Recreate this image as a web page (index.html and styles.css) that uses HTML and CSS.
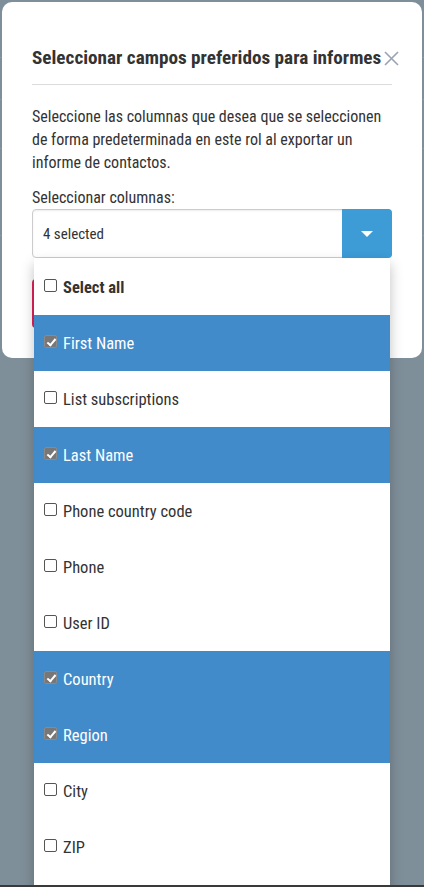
FILE: index.html
```html
<!DOCTYPE html>
<html lang="es">
<head>
<meta charset="utf-8">
<title>Seleccionar campos preferidos</title>
<link rel="stylesheet" href="styles.css">
</head>
<body>
<div class="modal">
  <div class="modal-header">
    <h2 class="modal-title">Seleccionar campos preferidos para informes</h2>
    <button class="close" aria-label="Cerrar">
      <svg width="15" height="15" viewBox="0 0 15 15"><path d="M1 1 L14 14 M14 1 L1 14" stroke="#98a3b3" stroke-width="1.6" fill="none"/></svg>
    </button>
  </div>
  <p class="desc">Seleccione las columnas que desea que se seleccionen de forma predeterminada en este rol al exportar un informe de contactos.</p>
  <div class="label">Seleccionar columnas:</div>
  <div class="select">
    <div class="select-box">
      <div class="select-text">4 selected</div>
      <div class="select-btn"><span class="caret"></span></div>
    </div>
    <ul class="dropdown">
      <li class="option all"><span class="cb"></span>Select all</li>
      <li class="option selected"><span class="cb checked"></span>First Name</li>
      <li class="option"><span class="cb"></span>List subscriptions</li>
      <li class="option selected"><span class="cb checked"></span>Last Name</li>
      <li class="option"><span class="cb"></span>Phone country code</li>
      <li class="option"><span class="cb"></span>Phone</li>
      <li class="option"><span class="cb"></span>User ID</li>
      <li class="option selected"><span class="cb checked"></span>Country</li>
      <li class="option selected"><span class="cb checked"></span>Region</li>
      <li class="option"><span class="cb"></span>City</li>
      <li class="option"><span class="cb"></span>ZIP</li>
    </ul>
  </div>
  <button class="btn-danger" aria-label="Cancelar"></button>
</div>
<div class="bottom-edge"></div>
</body>
</html>
```
FILE: styles.css
```css
html, body {
  height: 100%;
}
body {
  margin: 0;
  overflow: hidden;
  font-family: "Roboto Condensed", "Liberation Sans Narrow", Roboto, sans-serif;
  color: #333;
  background-color: #7f8f99;
  background-image:
    linear-gradient(rgba(255,255,255,.09), rgba(255,255,255,.09)),
    linear-gradient(rgba(255,255,255,.09), rgba(255,255,255,.09)),
    linear-gradient(rgba(255,255,255,.09), rgba(255,255,255,.09)),
    linear-gradient(rgba(255,255,255,.09), rgba(255,255,255,.09));
  background-size: 100% 1px;
  background-repeat: no-repeat;
  background-position: 0 57px, 0 99px, 0 148px, 0 235px;
}
.modal {
  margin: 2px;
  background: #fff;
  border-radius: 10px;
  padding: 44px 30px 30px;
}
.modal-header {
  display: flex;
  align-items: center;
  justify-content: space-between;
  padding-bottom: 14px;
  border-bottom: 1px solid #dcdcdc;
}
.modal-title {
  margin: 0;
  font-size: 19.2px;
  line-height: 24px;
  font-weight: 700;
  color: #333;
  white-space: nowrap;
}
.close {
  border: 0;
  background: none;
  padding: 0;
  margin-right: -7px;
  width: 15px;
  height: 15px;
  display: flex;
}
.desc {
  margin: 20px 0 12px;
  font-size: 16px;
  line-height: 23px;
}
.label {
  font-size: 16px;
  line-height: 23px;
}
.select {
  position: relative;
}
.select-box {
  display: flex;
  height: 49px;
  box-sizing: border-box;
  border: 1px solid #ccc;
  border-radius: 4px;
  box-shadow: inset 0 1px 2px rgba(0,0,0,.08);
}
.select-text {
  flex: 1;
  display: flex;
  align-items: center;
  padding-left: 10px;
  font-size: 15px;
}
.select-btn {
  width: 50px;
  margin: -1px -1px -1px 0;
  background: #3d9bd6;
  border-radius: 0 4px 4px 0;
  display: flex;
  align-items: center;
  justify-content: center;
}
.caret {
  width: 0;
  height: 0;
  border-left: 6px solid transparent;
  border-right: 6px solid transparent;
  border-top: 6px solid #fff;
}
.dropdown {
  position: absolute;
  top: 100%;
  left: 2px;
  right: 2px;
  margin: 0;
  padding: 1px 0 40px;
  list-style: none;
  background: #fff;
  box-shadow: 0 6px 12px rgba(0,0,0,.25);
  z-index: 5;
}
.option {
  height: 56px;
  display: flex;
  align-items: center;
  padding-left: 10px;
  font-size: 16.5px;
  color: #333;
}
.option.all {
  font-weight: 700;
}
.option.selected {
  background: #428bca;
  color: #fff;
}
.cb {
  width: 13px;
  height: 13px;
  box-sizing: border-box;
  border: 1px solid #555;
  border-radius: 2px;
  background: #fff;
  margin-right: 6px;
  margin-bottom: 3px;
  position: relative;
  flex: none;
}
.cb.checked {
  background: #777;
  border-color: #8a8a8a;
}
.cb.checked::after {
  content: "";
  position: absolute;
  left: 3.5px;
  top: 0.5px;
  width: 3px;
  height: 7px;
  border-right: 2px solid #fff;
  border-bottom: 2px solid #fff;
  transform: rotate(40deg);
}
.btn-danger {
  margin-top: 21px;
  width: 100px;
  height: 49px;
  padding: 0;
  border: 0;
  border-radius: 4px;
  background: #e0245e;
  display: block;
}
.bottom-edge {
  position: fixed;
  left: 0;
  right: 0;
  bottom: 0;
  height: 2px;
  background: #3a3a3a;
  z-index: 10;
}
```
